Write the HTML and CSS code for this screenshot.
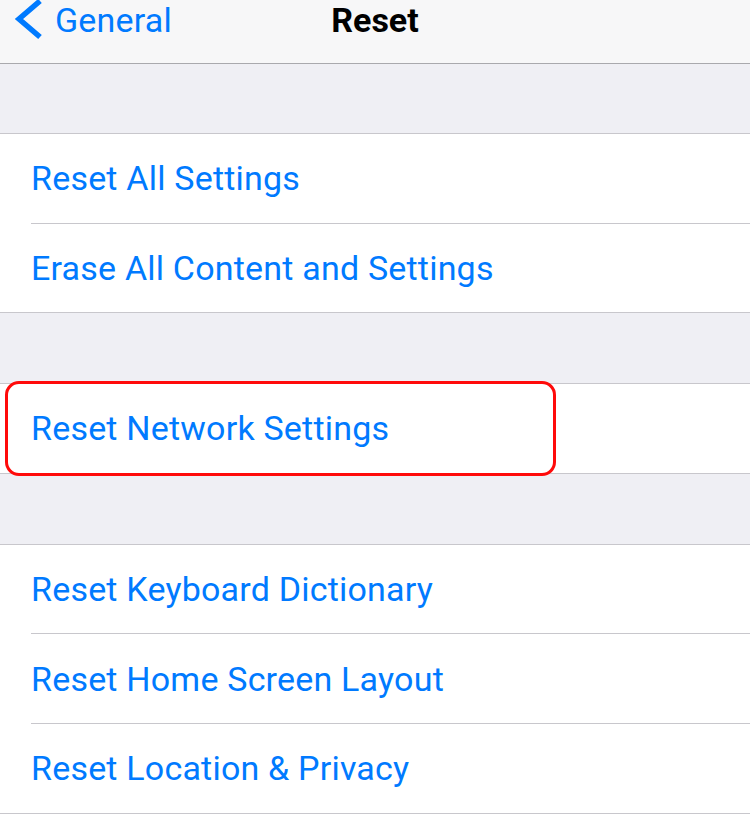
FILE: index.html
```html
<!DOCTYPE html>
<html lang="en">
<head>
    <meta charset="UTF-8">
    <meta name="viewport" content="width=device-width, initial-scale=1.0">
    <title>Reset</title>
    <link rel="stylesheet" href="styles.css">
</head>
<body>
    <header class="nav-bar">
        <a class="back" href="#">
            <svg class="chevron" width="28" height="42" viewBox="0 0 28 42">
                <polyline points="26,2 5,20 26,38" fill="none" stroke="#007aff" stroke-width="5.5"/>
            </svg>
            <span>General</span>
        </a>
        <h1 class="title">Reset</h1>
        <div></div>
    </header>

    <div class="spacer first"></div>
    <section class="group">
        <div class="row">Reset All Settings</div>
        <div class="row">Erase All Content and Settings</div>
    </section>

    <div class="spacer"></div>
    <section class="group highlighted">
        <div class="row">Reset Network Settings</div>
        <div class="highlight"></div>
    </section>

    <div class="spacer"></div>
    <section class="group">
        <div class="row">Reset Keyboard Dictionary</div>
        <div class="row">Reset Home Screen Layout</div>
        <div class="row">Reset Location &amp; Privacy</div>
    </section>
</body>
</html>
```

FILE: styles.css
```css
body {
    margin: 0;
    padding: 0;
    background-color: #efeff4;
    font-family: Roboto, 'Noto Sans', sans-serif;
    color: #000;
    overflow: hidden;
}
.nav-bar {
    height: 63px;
    background-color: #f7f7f8;
    border-bottom: 1px solid #a9a9ad;
    display: grid;
    grid-template-columns: 1fr auto 1fr;
    align-items: start;
}
.back {
    display: flex;
    align-items: center;
    height: 40px;
    padding-left: 14px;
    color: #007aff;
    text-decoration: none;
    font-size: 34px;
    letter-spacing: 0.2px;
}
.back .chevron {
    margin-right: 13px;
    flex-shrink: 0;
}
.title {
    margin: 0;
    height: 40px;
    line-height: 40px;
    font-size: 34px;
    font-weight: 700;
}
.spacer {
    height: 70px;
}
.spacer.first {
    height: 69px;
}
.group {
    background-color: #fff;
    border-top: 1px solid #c8c7cc;
    border-bottom: 1px solid #c8c7cc;
}
.row {
    margin-left: 31px;
    height: 88.6px;
    display: flex;
    align-items: center;
    color: #007aff;
    font-size: 34px;
    letter-spacing: 0.2px;
}
.row + .row {
    border-top: 1px solid #c8c7cc;
}
.highlighted {
    position: relative;
}

/* red annotation around the network row */
.highlight {
    position: absolute;
    left: 5px;
    top: -3px;
    width: 545px;
    height: 89px;
    border: 3px solid #ff0a0a;
    border-radius: 14px;
}
```
